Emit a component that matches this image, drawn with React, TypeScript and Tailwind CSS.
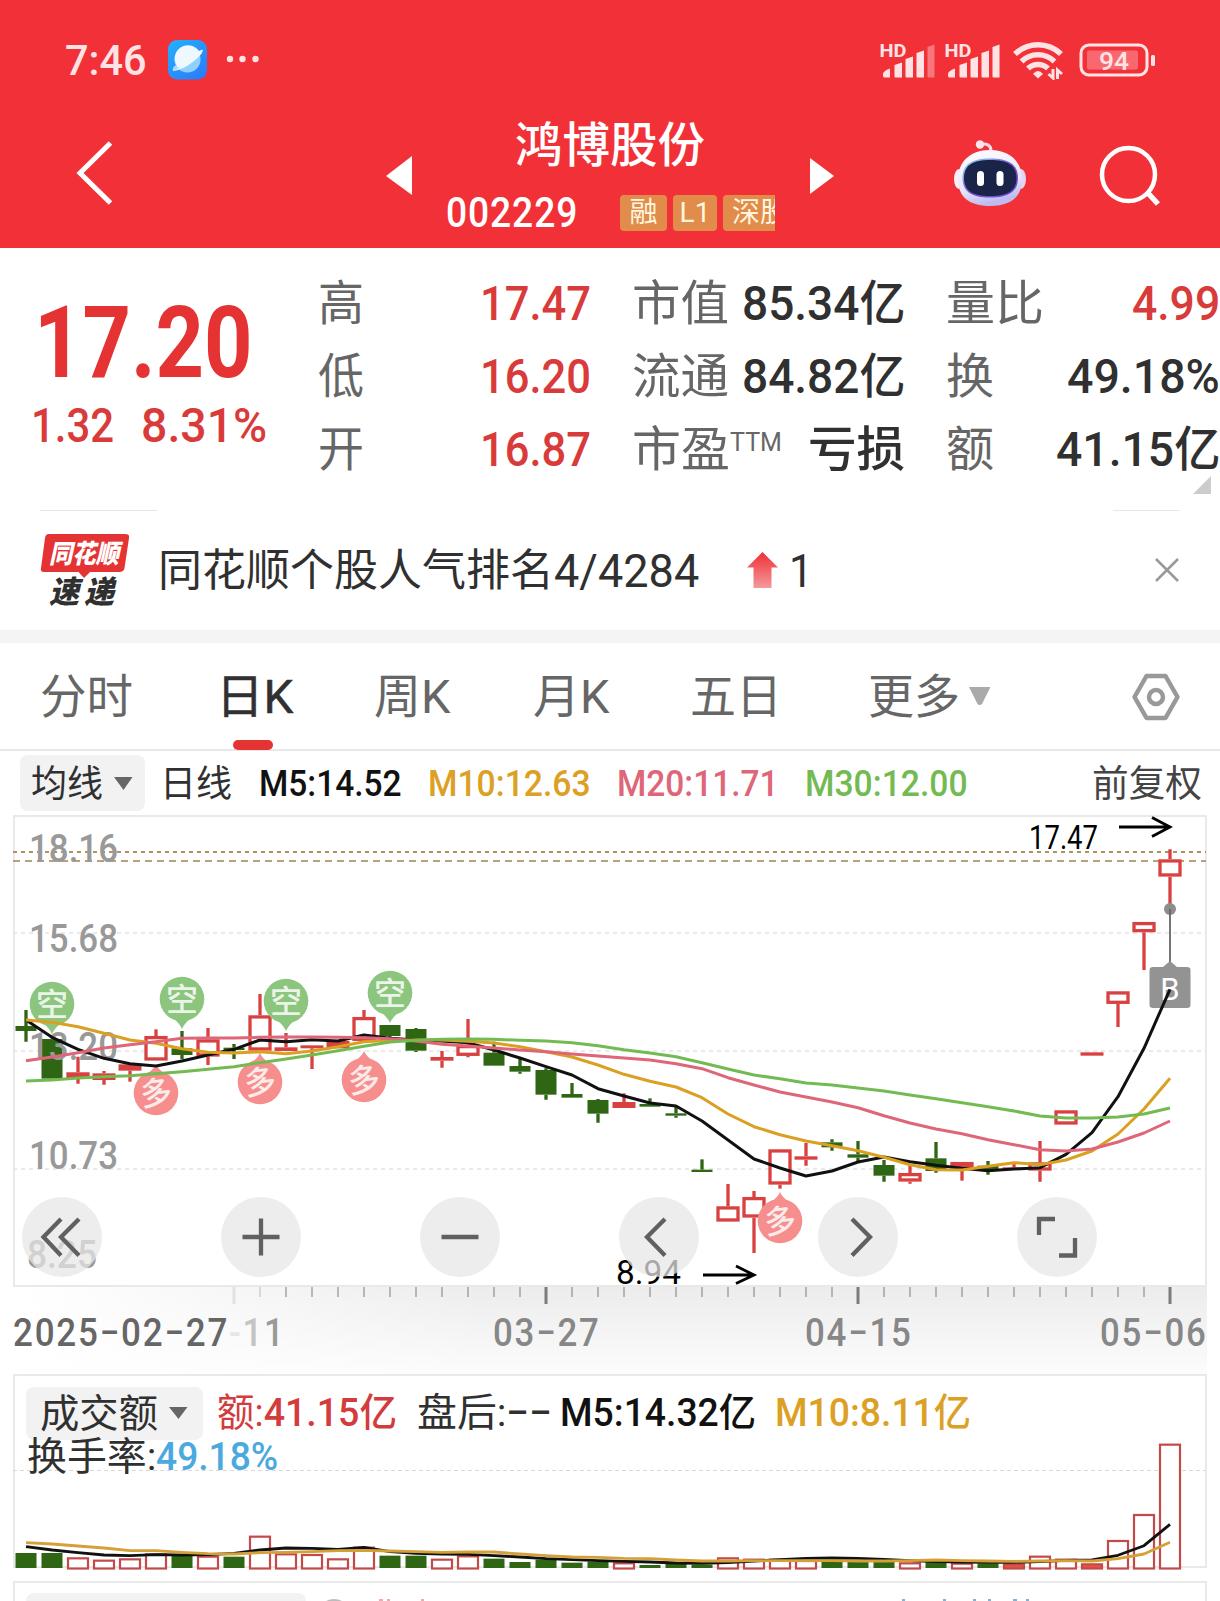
import { useLayoutEffect, useRef, useState } from 'react';
import type { ReactNode } from 'react';

// Shrinks or stretches its text horizontally so it fills the box width
function Fit({ className = '', children }: { className?: string; children: ReactNode }) {
  const box = useRef<HTMLSpanElement>(null);
  const inner = useRef<HTMLSpanElement>(null);
  const [scale, setScale] = useState(1);

  useLayoutEffect(() => {
    if (box.current && inner.current) {
      setScale(box.current.clientWidth / inner.current.offsetWidth);
    }
  }, []);

  return (
    <span ref={box} className={`inline-block shrink-0 whitespace-nowrap ${className}`}>
      <span ref={inner} className="inline-block origin-left" style={{ transform: `scaleX(${scale})` }}>
        {children}
      </span>
    </span>
  );
}

// kind: g = green filled, f = red filled, r = red hollow
// values are thirds of a pixel measured from y = 960
type Candle = [string, number, number, number, number];
const CANDLES: Candle[] = [
  ['g', 198, 213, 150, 245], ['g', 237, 356, 237, 356], ['r', 337, 355, 290, 371], ['f', 340, 360, 333, 374],
  ['f', 313, 332, 313, 365], ['r', 228, 302, 208, 302], ['g', 265, 285, 213, 298], ['r', 238, 290, 204, 315],
  ['g', 263, 270, 252, 297], ['r', 166, 272, 102, 272], ['f', 262, 273, 219, 273], ['f', 256, 265, 256, 327],
  ['f', 243, 265, 243, 265], ['r', 171, 243, 150, 243], ['g', 195, 228, 195, 234], ['g', 207, 272, 204, 276],
  ['f', 291, 302, 273, 323], ['r', 255, 288, 177, 292], ['g', 278, 317, 245, 317], ['g', 318, 335, 297, 341],
  ['g', 330, 404, 325, 419], ['g', 402, 413, 369, 413], ['g', 420, 461, 417, 488], ['f', 426, 444, 400, 444],
  ['g', 432, 440, 415, 440], ['g', 460, 467, 437, 473], ['g', 629, 636, 598, 636], ['r', 739, 785, 672, 785],
  ['r', 711, 773, 693, 879], ['r', 568, 674, 568, 686], ['f', 589, 599, 549, 617], ['g', 547, 562, 538, 572],
  ['g', 583, 593, 543, 605], ['g', 615, 647, 600, 665], ['r', 639, 665, 615, 671], ['g', 595, 633, 546, 638],
  ['r', 606, 624, 606, 662], ['g', 617, 632, 603, 644], ['f', 622, 629, 609, 629], ['r', 607, 632, 543, 665],
  ['r', 451, 494, 451, 494], ['f', 277, 287, 277, 287], ['r', 94, 132, 94, 201], ['r', -114, -83, -114, 30],
  ['r', -302, -250, -332, -157],
];

const MA5 = [180, 232, 268, 295, 311, 318, 303, 285, 268, 240, 245, 239, 243, 225, 235, 240, 243, 248, 270, 294, 320, 345, 386, 408, 429, 438, 483, 540, 597, 624, 648, 633, 606, 591, 605, 616, 625, 632, 627, 623, 583, 518, 410, 265, 88];
const MA10 = [180, 187, 200, 220, 240, 250, 266, 277, 279, 275, 281, 273, 260, 245, 241, 240, 240, 244, 249, 260, 275, 291, 315, 343, 364, 381, 413, 462, 500, 524, 543, 557, 572, 592, 614, 629, 630, 619, 608, 614, 600, 573, 522, 447, 355];
const MA20 = [302, 291, 278, 264, 254, 245, 235, 234, 234, 232, 231, 231, 232, 233, 236, 243, 253, 258, 264, 270, 275, 282, 288, 294, 300, 311, 326, 353, 375, 396, 411, 426, 443, 467, 489, 507, 521, 539, 554, 569, 573, 567, 546, 519, 483];
const MA30 = [363, 360, 354, 350, 347, 341, 335, 328, 320, 308, 297, 285, 272, 259, 246, 241, 238, 237, 238, 241, 243, 248, 257, 269, 279, 290, 308, 327, 345, 356, 369, 375, 384, 393, 405, 416, 428, 440, 453, 468, 474, 474, 471, 462, 444];

// values below are thirds of a pixel measured from y = 1270
const VOLUMES = [849, 849, 862, 869, 865, 850, 857, 857, 860, 797, 850, 852, 865, 830, 857, 857, 866, 856, 866, 876, 869, 878, 875, 877, 885, 881, 884, 862, 866, 866, 870, 875, 875, 875, 877, 875, 878, 880, 880, 857, 866, 880, 810, 732, 521];
const VOL_KINDS = 'ggrrrrgrgrrrrrggrrgggggrgggrrrrgggrgrgfrrfrrr';
const VOL5 = [830, 840, 848, 855, 857, 854, 855, 854, 850, 840, 834, 835, 838, 832, 845, 850, 852, 853, 857, 861, 866, 869, 872, 874, 876, 879, 880, 878, 873, 869, 865, 864, 865, 868, 872, 875, 876, 877, 877, 875, 871, 870, 856, 827, 763];
const VOL10 = [818, 822, 828, 834, 842, 842, 847, 851, 852, 848, 847, 845, 842, 841, 843, 845, 847, 846, 846, 852, 857, 861, 862, 865, 866, 870, 873, 873, 872, 872, 872, 872, 873, 873, 872, 870, 872, 873, 874, 873, 872, 873, 866, 852, 817];

const RED = '#d94040';
const GREEN = '#2f6614';
const colX = (i: number) => 26 + i * 26;
const linePath = (data: number[], base: number) =>
  data.map((v, i) => `${i ? 'L' : 'M'}${colX(i)} ${(base + v / 3).toFixed(1)}`).join('');

function Signal({ weak }: { weak?: boolean }) {
  return (
    <svg className="overflow-visible" width="55" height="38" viewBox="0 0 55 38" fill="#ffe3e4">
      <text x="-1.500" y="15.500" fontFamily="Roboto, sans-serif" fontWeight="700" fontSize="18.500" textLength="27" lengthAdjust="spacingAndGlyphs">HD</text>
      <path d="M2 33 Q2 30 9 27.500 V36.500 H4 Q2 36.500 2 35Z" />
      <path d="M13.500 24 L21 21.500 V36.500 H14.500 Q13.500 36.500 13.500 35.500Z" />
      <path d="M24.500 18 L32 15.500 V36.500 H25.500 Q24.500 36.500 24.500 35.500Z" />
      <path d="M35.500 12 L43 9.500 V36.500 H36.500 Q35.500 36.500 35.500 35.500Z" />
      <path d="M46.500 6 L53.500 3.500 V36.500 H47.500 Q46.500 36.500 46.500 35.500Z" opacity={weak ? 0.4 : 1} />
    </svg>
  );
}

function StatusBar() {
  return (
    <div className="flex h-[120px] items-center pl-[65px] pr-[64px]">
      <Fit className="w-[82px] text-[43px] font-medium leading-[44px] text-[#ffe3e4]">7:46</Fit>
      <svg className="ml-[21px]" width="39" height="40" viewBox="0 0 39 40">
        <defs>
          <linearGradient id="app" x1="0" y1="0" x2="0.8" y2="1">
            <stop offset="0" stopColor="#22b2fb" />
            <stop offset="1" stopColor="#2c7cfb" />
          </linearGradient>
        </defs>
        <rect width="39" height="39.500" rx="9" fill="url(#app)" />
        <circle cx="19.500" cy="19.500" r="13" fill="#8fd0ff" />
        <path d="M5 31 Q4 27 9 26 A13 13 0 1 1 31 11 Q35 9 35 10 Q34 15 26 21 Q15 30 5 31Z" fill="#eef9ff" />
        <path d="M5 31 Q4 27 8 25 Q9 28 12 28Z" fill="#a5daff" />
      </svg>
      <svg className="-mt-[2px] ml-[19px]" width="34" height="8" fill="#ffe3e4">
        <circle cx="4" cy="4" r="3.200" />
        <circle cx="16.500" cy="4" r="3.200" />
        <circle cx="29.500" cy="4" r="3.200" />
      </svg>
      <div className="ml-auto flex items-center">
        <Signal weak />
        <div className="w-[10px]" />
        <Signal />
        <svg className="ml-[12px]" width="50" height="40" viewBox="0 0 50 40" fill="none" stroke="#ffe3e4" strokeWidth="5.500">
          <path d="M2 14 A33 33 0 0 1 48 14" />
          <path d="M8.500 21.500 A23.500 23.500 0 0 1 41.500 21.500" />
          <path d="M15 28.500 A14.500 14.500 0 0 1 35 28.500" />
          <path d="M20 34 Q25 28 30 34 L25 38.500Z" fill="#ffe3e4" stroke="none" />
          <path d="M40 29 V38 L35.500 34 M44.500 39 V30 L49 34" strokeWidth="3" />
        </svg>
        <svg className="ml-[16px]" width="77" height="36" viewBox="0 0 77 36">
          <rect x="2" y="3" width="66" height="30" rx="8" fill="none" stroke="#ffe3e4" strokeWidth="3" />
          <rect x="8" y="8.500" width="51" height="19" rx="2" fill="#f8686e" />
          <rect x="72" y="13" width="4" height="11" rx="1.500" fill="#ffe3e4" />
          <text x="20" y="27.500" fontFamily="Roboto, sans-serif" fontWeight="500" fontSize="26.500" fill="#ffe3e4" textLength="30" lengthAdjust="spacingAndGlyphs">94</text>
        </svg>
      </div>
    </div>
  );
}

function Robot() {
  return (
    <svg width="74" height="68" viewBox="0 0 74 68">
      <defs>
        <linearGradient id="head" x1="0" y1="0" x2="0.3" y2="1">
          <stop offset="0" stopColor="#fff" />
          <stop offset="0.7" stopColor="#e9e4f8" />
          <stop offset="1" stopColor="#bdbcf0" />
        </linearGradient>
        <linearGradient id="rim" x1="0" y1="0" x2="1" y2="1">
          <stop offset="0" stopColor="#8fe9f2" />
          <stop offset="0.5" stopColor="#7a50d8" />
          <stop offset="1" stopColor="#6b45cf" />
        </linearGradient>
      </defs>
      <path d="M27 5.500 Q38 3.500 38 12" fill="none" stroke="#f8d9ea" strokeWidth="3" />
      <circle cx="27" cy="5.500" r="4.200" fill="#ffe4ee" />
      <ellipse cx="6" cy="40" rx="5" ry="10" fill="#fbeef6" />
      <ellipse cx="68" cy="40" rx="5" ry="10" fill="#e6d4f2" />
      <path d="M37 11 C58 11 69 24 69 40 C69 58 58 67 37 67 C16 67 5 58 5 40 C5 24 16 11 37 11Z" fill="url(#head)" />
      <path d="M37 19.500 C55 19.500 65 25 65 39 C65 53 55 58.500 37 58.500 C19 58.500 9.500 53 9.500 39 C9.500 25 19 19.500 37 19.500Z" fill="url(#rim)" />
      <path d="M37 21 C54 21 63.500 26 63.500 39 C63.500 52 54 57 37 57 C20 57 11 52 11 39 C11 26 20 21 37 21Z" fill="#1a2448" />
      <rect x="24" y="32" width="7" height="15" rx="3.500" fill="#fff" />
      <rect x="43.500" y="32" width="7" height="15" rx="3.500" fill="#fff" />
    </svg>
  );
}

function Header() {
  return (
    <header className="h-[248px] bg-[#f23038]">
      <StatusBar />
      <div className="flex h-[128px] text-white">
        <svg className="ml-[74px] mt-[18px]" width="42" height="70" viewBox="0 0 42 70" fill="none" stroke="#fff" strokeWidth="5">
          <path d="M36.500 5 L6 35 L36.500 65" />
        </svg>
        <svg className="ml-[270px] mt-[36px]" width="26" height="39" fill="#fff">
          <path d="M0 20 L26 0 V39Z" />
        </svg>
        <div className="ml-[33px] w-[364px] shrink-0">
          <Fit className="ml-[70px] mt-[2px] block! w-[190px] text-[48px] font-medium leading-[48px]">鸿博股份</Fit>
          <div className="mt-[24px] flex h-[37px] items-center">
            <Fit className="ml-[1px] w-[132px] text-[42px] font-medium leading-[40px] tracking-[1px]">002229</Fit>
            <div className="ml-[42px] flex w-[155px] gap-[6px] overflow-hidden whitespace-nowrap text-[28px] leading-[36px] text-[#fff6df]">
              <span className="w-[47px] shrink-0 rounded bg-[#e18c4b] text-center">融</span>
              <span className="w-[44px] shrink-0 rounded bg-[#e18c4b] text-center">L1</span>
              <span className="w-[80px] shrink-0 rounded bg-[#e18c4b] pl-[9px]">深股</span>
            </div>
          </div>
        </div>
        <svg className="mt-[38px]" width="26" height="37" fill="#fff">
          <path d="M1 0 L25 18 L1 36Z" />
        </svg>
        <div className="ml-[118px] mt-[19px]"><Robot /></div>
        <svg className="ml-[72px] mt-[24px]" width="62" height="62" fill="none" stroke="#fff" strokeWidth="4.500">
          <circle cx="29.500" cy="30.500" r="26.500" />
          <path d="M48 48 L59 60" strokeWidth="5.500" />
        </svg>
      </div>
    </header>
  );
}

function Quote() {
  return (
    <section className="relative flex h-[262px] pt-[19px] text-[48px] leading-[73px] text-[#303030]">
      <div className="w-[318px] text-[#e53232]">
        <Fit className="ml-[34px] mt-[22px] block! w-[219px] text-[100px] font-bold leading-[108px]">17.20</Fit>
        <div className="mt-[-8px] flex text-[49px] font-medium text-[#d93a3a]">
          <Fit className="ml-[31px] w-[83px]">1.32</Fit>
          <Fit className="ml-[27px] w-[126px]">8.31%</Fit>
        </div>
      </div>
      <div className="w-[45px] text-[#666]">
        <Fit className="w-[46px]">高</Fit>
        <Fit className="w-[46px]">低</Fit>
        <Fit className="w-[46px]">开</Fit>
      </div>
      <div className="ml-[117px] w-[111px] text-[49px] font-medium text-[#d93a3a]">
        <Fit className="w-[111px]">17.47</Fit>
        <Fit className="w-[111px]">16.20</Fit>
        <Fit className="w-[111px]">16.87</Fit>
      </div>
      <div className="ml-[41px] w-[273px] font-medium">
        <div className="flex justify-between"><Fit className="w-[97px] font-normal text-[#666]">市值</Fit><Fit className="w-[163px]">85.34亿</Fit></div>
        <div className="flex justify-between"><Fit className="w-[97px] font-normal text-[#666]">流通</Fit><Fit className="w-[163px]">84.82亿</Fit></div>
        <div className="flex justify-between">
          <div className="flex text-[#666]">
            <Fit className="w-[98px] font-normal">市盈</Fit>
            <Fit className="w-[52px] text-[26px] font-normal leading-[58px]">TTM</Fit>
          </div>
          <Fit className="w-[97px]">亏损</Fit>
        </div>
      </div>
      <div className="ml-[41px] w-[274px] font-medium">
        <div className="flex justify-between"><Fit className="w-[98px] font-normal text-[#666]">量比</Fit><Fit className="w-[88px] text-[#d93a3a]">4.99</Fit></div>
        <div className="flex justify-between"><Fit className="w-[48px] font-normal text-[#666]">换</Fit><Fit className="w-[153px]">49.18%</Fit></div>
        <div className="flex justify-between"><Fit className="w-[48px] font-normal text-[#666]">额</Fit><Fit className="w-[164px]">41.15亿</Fit></div>
      </div>
      <svg className="absolute right-[9px] top-[228px]" width="18" height="18" fill="#ccc">
        <path d="M18 0 V18 H0Z" />
      </svg>
    </section>
  );
}

function News() {
  return (
    <section className="h-[120px]">
      <div className="flex justify-between px-[40px]">
        <div className="h-px w-[117px] bg-[#e8e8e8]" />
        <div className="h-px w-[67px] bg-[#e8e8e8]" />
      </div>
      <div className="flex h-[119px] items-center text-[#303030]">
        <svg className="-mt-[2px] ml-[40px]" width="90" height="76" viewBox="0 0 90 76">
          <path d="M9 2 H85 Q90 2 89 6 L84.500 36 Q84 40 79 40 H50 L44 46 L38.500 40 H4 Q0 40 1 36 L5 6 Q5.500 2 9 2Z" fill="#e53232" />
          <g fontFamily="'Noto Sans CJK SC', sans-serif" fontWeight="900" fontStyle="italic">
            <text x="9" y="30.500" fontSize="26" fill="#fff" textLength="70" lengthAdjust="spacingAndGlyphs">同花顺</text>
            <text x="9" y="71" fontSize="31" fill="#303030" textLength="30" lengthAdjust="spacingAndGlyphs">速</text>
            <text x="44" y="71" fontSize="31" fill="#303030" textLength="30" lengthAdjust="spacingAndGlyphs">递</text>
          </g>
        </svg>
        <Fit className="ml-[28px] w-[396px] text-[44px] leading-[60px]">同花顺个股人气排名</Fit>
        <Fit className="w-[145px] text-[46px] leading-[60px]">4/4284</Fit>
        <svg className="-mt-[2px] ml-[48px]" width="31" height="36" viewBox="0 0 31 36">
          <defs>
            <linearGradient id="up" x1="0" y1="0" x2="0" y2="1">
              <stop offset="0" stopColor="#ee2f35" />
              <stop offset="1" stopColor="#f59a9c" />
            </linearGradient>
          </defs>
          <path d="M15.500 0 L31 15.500 H24.500 V36 H6.500 V15.500 H0Z" fill="url(#up)" />
        </svg>
        <Fit className="ml-[11px] w-[24px] text-[46px] leading-[60px]">1</Fit>
        <svg className="-mt-[2px] ml-auto mr-[41px]" width="24" height="24" stroke="#999" strokeWidth="2.500">
          <path d="M1 1 L23 23 M23 1 L1 23" />
        </svg>
      </div>
    </section>
  );
}

function Tabs() {
  return (
    <nav className="flex h-[108px] items-start border-b-2 border-[#e8e8e8] pl-[40px] text-[47px] leading-[107px] text-[#666]">
      <Fit className="w-[93px]">分时</Fit>
      <div className="relative ml-[83px] w-[78px] text-[#303030]">
        <Fit className="w-[78px] [-webkit-text-stroke:0.5px]">日K</Fit>
        <div className="absolute left-[17px] top-[97px] h-[10px] w-[40px] rounded-full bg-[#e53232]" />
      </div>
      <Fit className="ml-[80px] w-[77px]">周K</Fit>
      <Fit className="ml-[82px] w-[77px]">月K</Fit>
      <Fit className="ml-[80px] w-[92px]">五日</Fit>
      <Fit className="ml-[86px] w-[92px]">更多</Fit>
      <svg className="ml-[8px] mt-[43px]" width="24" height="20" fill="#aaa">
        <path d="M1 1 H22.500 L14 18 Q11.500 20 9.500 18Z" />
      </svg>
      <svg className="ml-[139px] mt-[30px]" width="50" height="48" fill="none" stroke="#999" strokeWidth="4.500" strokeLinejoin="round">
        <path d="M15.500 3 H34.500 L46.500 24 L34.500 45 H15.500 L3.500 24Z" />
        <circle cx="25" cy="24" r="7" />
      </svg>
    </nav>
  );
}

function Legend() {
  return (
    <div className="flex h-[64px] items-center pl-[20px] pt-[2px] text-[37px] font-medium leading-[64px]">
      <div className="-mt-[2px] flex h-[56px] w-[125px] items-center rounded-lg bg-[#f2f2f2] text-[#303030]">
        <Fit className="ml-[11px] mt-[3px] w-[72px] font-normal">均线</Fit>
        <svg className="ml-[11px]" width="19" height="14" fill="#666"><path d="M0 1 H18.500 L9.500 14Z" /></svg>
      </div>
      <Fit className="ml-[15px] mt-[1px] w-[72px] font-normal text-[#303030]">日线</Fit>
      <Fit className="ml-[27px] w-[143px] text-[#111]">M5:14.52</Fit>
      <Fit className="ml-[26px] w-[163px] text-[#dca024]">M10:12.63</Fit>
      <Fit className="ml-[26px] w-[162px] text-[#de6678]">M20:11.71</Fit>
      <Fit className="ml-[26px] w-[163px] text-[#74ba52]">M30:12.00</Fit>
      <Fit className="ml-[124px] mt-[1px] w-[110px] font-normal text-[#444]">前复权</Fit>
    </div>
  );
}

function Pin({ x, y, long }: { x: number; y: number; long?: boolean }) {
  const d = long
    ? 'M0 -29 Q2 -24 9 -19 H-9 Q-2 -24 0 -29Z'
    : 'M0 30 Q2 25 9 19 H-9 Q-2 25 0 30Z';
  return (
    <g transform={`translate(${x} ${y})`} fill={long ? '#f58e8c' : '#8bc57e'}>
      <circle r="22.300" />
      <path d={d} />
      <text
        y="11.500"
        textAnchor="middle"
        fontSize="32"
        fontWeight="500"
        fill="#fff"
        opacity="0.82"
        transform={long ? 'rotate(-8)' : undefined}
      >
        {long ? '多' : '空'}
      </text>
    </g>
  );
}

const BUTTONS = [
  { x: 62, d: 'M-1 -18 L-18.500 0 L-1 18.500 M17 -18 L-1 0 L17 18.500' },
  { x: 261, d: 'M-18.500 0 H18.500 M0 -18.500 V18.500' },
  { x: 460, d: 'M-18.500 0 H18.500' },
  { x: 659, d: 'M6 -18 L-12 0 L6 18.500' },
  { x: 858, d: 'M-6 -18 L12 0 L-6 18.500' },
  { x: 1057, d: 'M-18 -2 V-18 H-2 M2 18.500 H18 V1' },
];

function KChart() {
  return (
    <svg className="block" width="1220" height="472" viewBox="0 815 1220 472" fontFamily="Roboto, 'Noto Sans CJK SC', sans-serif">
      <rect x="14" y="816" width="1192" height="470" fill="none" stroke="#e9e9e9" strokeWidth="2" />
      <g stroke="#e4e4e4" strokeWidth="1.500" strokeDasharray="4 4">
        <path d="M13 933 H1206 M13 1051 H1206 M13 1169 H1206" />
      </g>
      <path d="M13 852 H1206" stroke="#b5915f" strokeWidth="2" strokeDasharray="4 4" />
      <path d="M13 861 H1206" stroke="#b9a07c" strokeWidth="2" strokeDasharray="7 5" />

      {CANDLES.map(([kind, top, bottom, high, low], i) => {
        const x = colX(i);
        const y1 = 960 + top / 3;
        const y2 = 960 + bottom / 3;
        const color = kind === 'g' ? GREEN : RED;
        return (
          <g key={i} stroke={color} fill={color} strokeWidth="3.300">
            <path d={`M${x} ${960 + high / 3} V${y1} M${x} ${y2} V${960 + low / 3}`} />
            {kind === 'r' ? (
              <rect x={x - 10} y={y1 + 1.6} width="20" height={Math.max(y2 - y1 - 3.3, 1)} fill="#fff" />
            ) : (
              <rect x={x - (kind === 'g' ? 10.5 : 11.5)} y={y1} width={kind === 'g' ? 21 : 23} height={y2 - y1} stroke="none" />
            )}
          </g>
        );
      })}

      <circle cx="1170" cy="909" r="6" fill="#8d8d8d" />
      <path d="M1170 909 V963" stroke="#666" strokeWidth="1.800" />
      <path d="M1170 961 L1177 967 H1187 Q1190.500 967 1190.500 970 V1005 Q1190.500 1008 1187 1008 H1153 Q1149.500 1008 1149.500 1005 V970 Q1149.500 967 1153 967 H1163Z" fill="#939393" />
      <text x="1170" y="999.500" textAnchor="middle" fontSize="31" fill="#fff">B</text>

      <g fill="#999" fontSize="39" fontWeight="500">
        <text x="29" y="862" textLength="89" lengthAdjust="spacingAndGlyphs">18.16</text>
        <text x="29" y="952" textLength="89" lengthAdjust="spacingAndGlyphs">15.68</text>
        <text x="29" y="1060" textLength="89" lengthAdjust="spacingAndGlyphs">13.20</text>
        <text x="29" y="1169" textLength="89" lengthAdjust="spacingAndGlyphs">10.73</text>
        <text x="27" y="1268" textLength="70" lengthAdjust="spacingAndGlyphs">8.25</text>
      </g>

      <Pin x={52} y={1004} />
      <Pin x={182} y={999} />
      <Pin x={286} y={1001} />
      <Pin x={390} y={993} />
      <Pin x={156} y={1093} long />
      <Pin x={260} y={1082} long />
      <Pin x={364} y={1080} long />
      <Pin x={780} y={1221} long />

      <g fill="none" strokeWidth="3" strokeLinejoin="round">
        <path d={linePath(MA5, 960)} stroke="#111" />
        <path d={linePath(MA10, 960)} stroke="#dba022" />
        <path d={linePath(MA20, 960)} stroke="#de6678" />
        <path d={linePath(MA30, 960)} stroke="#74ba52" />
      </g>

      <g fontSize="34" fill="#000">
        <text x="1029" y="849" textLength="69" lengthAdjust="spacingAndGlyphs">17.47</text>
        <text x="616" y="1284" textLength="65" lengthAdjust="spacingAndGlyphs">8.94</text>
      </g>
      <g fill="none" stroke="#000" strokeWidth="2.800">
        <path d="M1119 827 H1170 M1152 817.500 L1170 827 L1152 836.500" />
        <path d="M703 1275 H754 M736 1266 L754 1275 L736 1283.500" />
      </g>

      {BUTTONS.map((b) => (
        <g key={b.x} transform={`translate(${b.x} 1237)`}>
          <circle r="40" fill="#e6e6e6" opacity="0.73" />
          <path d={b.d} fill="none" stroke="#606060" strokeWidth="4.300" />
        </g>
      ))}
    </svg>
  );
}

function DateAxis() {
  return (
    <div className="relative h-[87px] bg-linear-to-b from-[#ececec] to-[#fcfcfc]">
      <div className="absolute inset-0 bg-linear-to-r from-white from-2% to-transparent to-40%" />
      <div className="absolute inset-y-0 right-0 w-[13px] bg-white" />
      <svg className="absolute left-0 top-0" width="1220" height="18">
        {Array.from({ length: 37 }, (_, n) => n + 8).map((i) => {
          const major = i % 12 === 8;
          return (
            <rect
              key={i}
              x={colX(i) - (major ? 1.5 : 0.5)}
              y="0"
              width={major ? 3 : 1}
              height={major ? 17 : 10}
              fill={i === 8 ? '#e2e2e2' : i === 9 ? '#bbb' : '#7c7c7c'}
            />
          );
        })}
      </svg>
      <div className="relative flex pt-[25px] text-[39px] font-medium leading-[42px] text-[#878787]">
        <Fit className="ml-[13px] w-[216px] tracking-[2px] text-[#666]">2025−02−27</Fit>
        <Fit className="w-[57px] tracking-[2px]">
          <span className="text-[#e6e6e6]">-</span>
          <span className="text-[#c4c4c4]">1</span>
          <span className="text-[#9a9a9a]">1</span>
        </Fit>
        <Fit className="ml-[207px] w-[108px] tracking-[2px]">03−27</Fit>
        <Fit className="ml-[204px] w-[108px] tracking-[2px]">04−15</Fit>
        <Fit className="ml-[187px] w-[108px] tracking-[2px]">05−06</Fit>
      </div>
    </div>
  );
}

function Volume() {
  return (
    <section className="relative h-[207px]">
      <svg className="absolute left-0 top-0" width="1220" height="207" viewBox="0 1374 1220 207">
        <rect x="14" y="1375" width="1192" height="192" fill="#fff" stroke="#e9e9e9" strokeWidth="2" />
        <path d="M13 1470.500 H1206" stroke="#d9d9d9" strokeWidth="1" strokeDasharray="4 3" />
        {VOLUMES.map((v, i) => {
          const top = 1270 + v / 3;
          const kind = VOL_KINDS[i];
          if (kind === 'g') return <rect key={i} x={colX(i) - 10.5} y={top} width="21" height={1568 - top} fill={GREEN} />;
          return (
            <rect
              key={i}
              x={colX(i) - 10}
              y={top + 1}
              width="20"
              height={1567.5 - top}
              fill={kind === 'f' ? '#ea5148' : '#fff'}
              stroke="#c44a4a"
              strokeWidth="2.200"
            />
          );
        })}
        <g fill="none" strokeWidth="2.800" strokeLinejoin="round">
          <path d={linePath(VOL5, 1270)} stroke="#111" />
          <path d={linePath(VOL10, 1270)} stroke="#d5a038" />
        </g>
      </svg>
      <div className="relative flex items-center pl-[26px] pt-[12px] text-[39px] font-medium leading-[54px]">
        <div className="flex h-[53px] w-[177px] items-center rounded-lg bg-[#f2f2f2] text-[#303030]">
          <Fit className="ml-[14px] mt-[1px] w-[118px] font-normal">成交额</Fit>
          <svg className="ml-[11px]" width="19" height="14" fill="#666"><path d="M0 1 H18.500 L9.500 13Z" /></svg>
        </div>
        <Fit className="ml-[14px] w-[180px] text-[#d33c3c]"><span className="font-normal">额:</span>41.15亿</Fit>
        <Fit className="ml-[20px] w-[89px] font-normal text-[#303030]">盘后:</Fit>
        <Fit className="w-[46px] text-[#303030]">−−</Fit>
        <Fit className="ml-[8px] w-[196px] text-[#111]">M5:14.32亿</Fit>
        <Fit className="ml-[19px] w-[196px] text-[#dca024]">M10:8.11亿</Fit>
      </div>
      <div className="relative -mt-[10px] flex pl-[27px] text-[39px] font-medium leading-[54px]">
        <Fit className="w-[129px] font-normal text-[#303030]">换手率:</Fit>
        <Fit className="w-[122px] text-[#4ba9de]">49.18%</Fit>
      </div>
    </section>
  );
}

function NextPanel() {
  return (
    <section className="mx-[13px] flex h-[20px] items-end overflow-hidden border-x-2 border-t-2 border-[#e9e9e9]">
      <div className="ml-[11px] h-[8px] w-[280px] rounded-t-lg bg-[#f2f2f2]" />
      <svg width="880" height="3">
        <path d="M20 3 Q28 -1 36 3Z" fill="#bbb" />
        <path d="M73 1 h4 v2 h-4z M81 1 h3 v2 h-3z M115 1 h3 v2 h-3z" fill="#f3a9aa" />
        <path d="M596 1 h3 v2 h-3z M637 1 h3 v2 h-3z M667 1 h3 v2 h-3z M682 1 h3 v2 h-3z M707 1 h4 v2 h-4z M720 1 h3 v2 h-3z" fill="#7fb3dc" />
      </svg>
    </section>
  );
}

export default function App() {
  return (
    <main className="h-[1601px] w-[1220px] overflow-hidden bg-white font-['Roboto','Noto_Sans_CJK_SC',sans-serif]">
      <Header />
      <Quote />
      <News />
      <div className="h-[13px] bg-[#f4f4f4]" />
      <Tabs />
      <Legend />
      <KChart />
      <DateAxis />
      <Volume />
      <NextPanel />
    </main>
  );
}
